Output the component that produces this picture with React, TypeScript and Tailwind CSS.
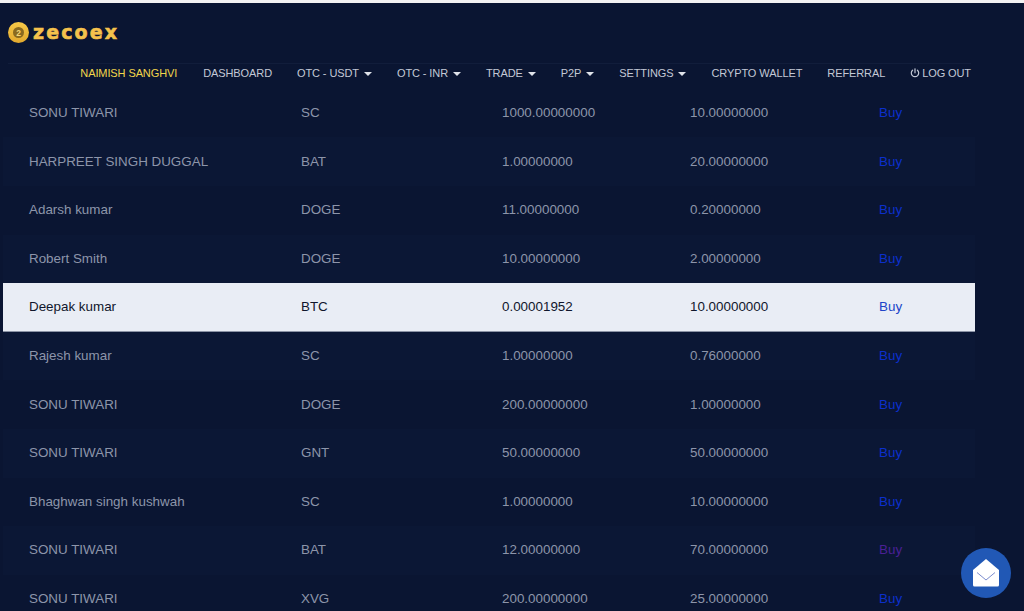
import React from "react";

const rows: [string, string, string, string][] = [
  ["SONU TIWARI", "SC", "1000.00000000", "10.00000000"],
  ["HARPREET SINGH DUGGAL", "BAT", "1.00000000", "20.00000000"],
  ["Adarsh kumar", "DOGE", "11.00000000", "0.20000000"],
  ["Robert Smith", "DOGE", "10.00000000", "2.00000000"],
  ["Deepak kumar", "BTC", "0.00001952", "10.00000000"],
  ["Rajesh kumar", "SC", "1.00000000", "0.76000000"],
  ["SONU TIWARI", "DOGE", "200.00000000", "1.00000000"],
  ["SONU TIWARI", "GNT", "50.00000000", "50.00000000"],
  ["Bhaghwan singh kushwah", "SC", "1.00000000", "10.00000000"],
  ["SONU TIWARI", "BAT", "12.00000000", "70.00000000"],
  ["SONU TIWARI", "XVG", "200.00000000", "25.00000000"],
];

function Caret() {
  return <span className="ml-[5px] inline-block h-0 w-0 border-x-[4px] border-t-[4px] border-x-transparent border-t-[#dfe3ea] align-middle" />;
}

const nav: [string, boolean][] = [
  ["DASHBOARD", false],
  ["OTC - USDT", true],
  ["OTC - INR", true],
  ["TRADE", true],
  ["P2P", true],
  ["SETTINGS", true],
  ["CRYPTO WALLET", false],
  ["REFERRAL", false],
];

export default function App() {
  return (
    <div className="relative h-[611px] w-[1024px] overflow-hidden bg-[#0a1532] font-['Liberation_Sans',Arial,sans-serif]">
      <div className="h-[3px] bg-[#f2f2f2]" />
      <header className="ml-[8px] w-[963px]">
        <div className="flex h-[61px] items-center gap-[4px] border-b border-[#111d3b] pb-[2px]">
          <svg width="21" height="21" viewBox="0 0 21 21">
            <defs>
              <linearGradient id="coin" x1="0" y1="0" x2="0" y2="1">
                <stop offset="0" stopColor="#f7c948" />
                <stop offset="1" stopColor="#e2a92e" />
              </linearGradient>
            </defs>
            <circle cx="10.5" cy="10.5" r="10.5" fill="url(#coin)" />
            <circle cx="10.5" cy="10.5" r="5.5" fill="#8a6a1f" />
            <text x="10.5" y="13.5" textAnchor="middle" fontSize="8.5" fontWeight="700" fill="#f6d77a" fontFamily="Liberation Sans">2</text>
          </svg>
          <span className="font-['DejaVu_Sans',sans-serif] text-[19px] leading-none font-bold tracking-[2.1px] text-[#f5c24c] [-webkit-text-stroke:0.6px_#f5c24c]">zecoex</span>
        </div>
        <nav className="mb-[6.9px] flex h-[18px] items-center justify-end text-[11px] tracking-[-0.1px] text-[#c3c9d6]">
          <span className="mr-[26px] text-[#f2d64b]">NAIMISH SANGHVI</span>
          {nav.map(([label, caret]) => (
            <span key={label} className="mr-[25px] whitespace-nowrap">
              {label}
              {caret && <Caret />}
            </span>
          ))}
          <span className="flex items-center whitespace-nowrap">
            <svg width="10" height="10" viewBox="0 0 10 10" fill="none" stroke="#c3c9d6" strokeWidth="1.2" strokeLinecap="round" className="mr-[2px]">
              <path d="M5 .8v4" />
              <path d="M2.6 2.2a3.7 3.7 0 1 0 4.8 0" />
            </svg>
            LOG OUT
          </span>
        </nav>
      </header>
      <main className="ml-[3px] w-[972px]">
        {rows.map((r, i) => {
          const active = i === 4;
          return (
            <div
              key={i}
              className={
                "grid h-[48.6px] grid-cols-[272px_201px_188px_189px_122px] items-center text-[13.4px] " +
                (active
                  ? "border-b border-[#8b93a5] bg-[#e9edf5] text-[#10162c]"
                  : i % 2 === 1
                    ? "bg-[#0b1735] text-[#8d95aa]"
                    : "text-[#8d95aa]")
              }
            >
              <span className="pl-[26px]">{r[0]}</span>
              <span className="pl-[26px]">{r[1]}</span>
              <span className="pl-[26px]">{r[2]}</span>
              <span className="pl-[26px]">{r[3]}</span>
              <span
                className={
                  "pl-[26px] " +
                  (active ? "text-[#2044c8]" : i === 9 ? "text-[#4a2096]" : "text-[#0c30cc]")
                }
              >
                Buy
              </span>
            </div>
          );
        })}
      </main>
      <div className="absolute top-[548px] left-[961px] flex h-[50px] w-[50px] items-center justify-center rounded-full bg-[#2158b5]">
        <svg width="26" height="28" viewBox="0 0 26 28">
          <path d="M13 0 26 11v15a1.5 1.5 0 0 1-1.5 1.5h-23A1.5 1.5 0 0 1 0 26V11Z" fill="#fff" />
          <path d="M4 13.5 13 21l9-7.5" fill="none" stroke="#5b6fc0" strokeWidth="0.8" />
        </svg>
      </div>
    </div>
  );
}
